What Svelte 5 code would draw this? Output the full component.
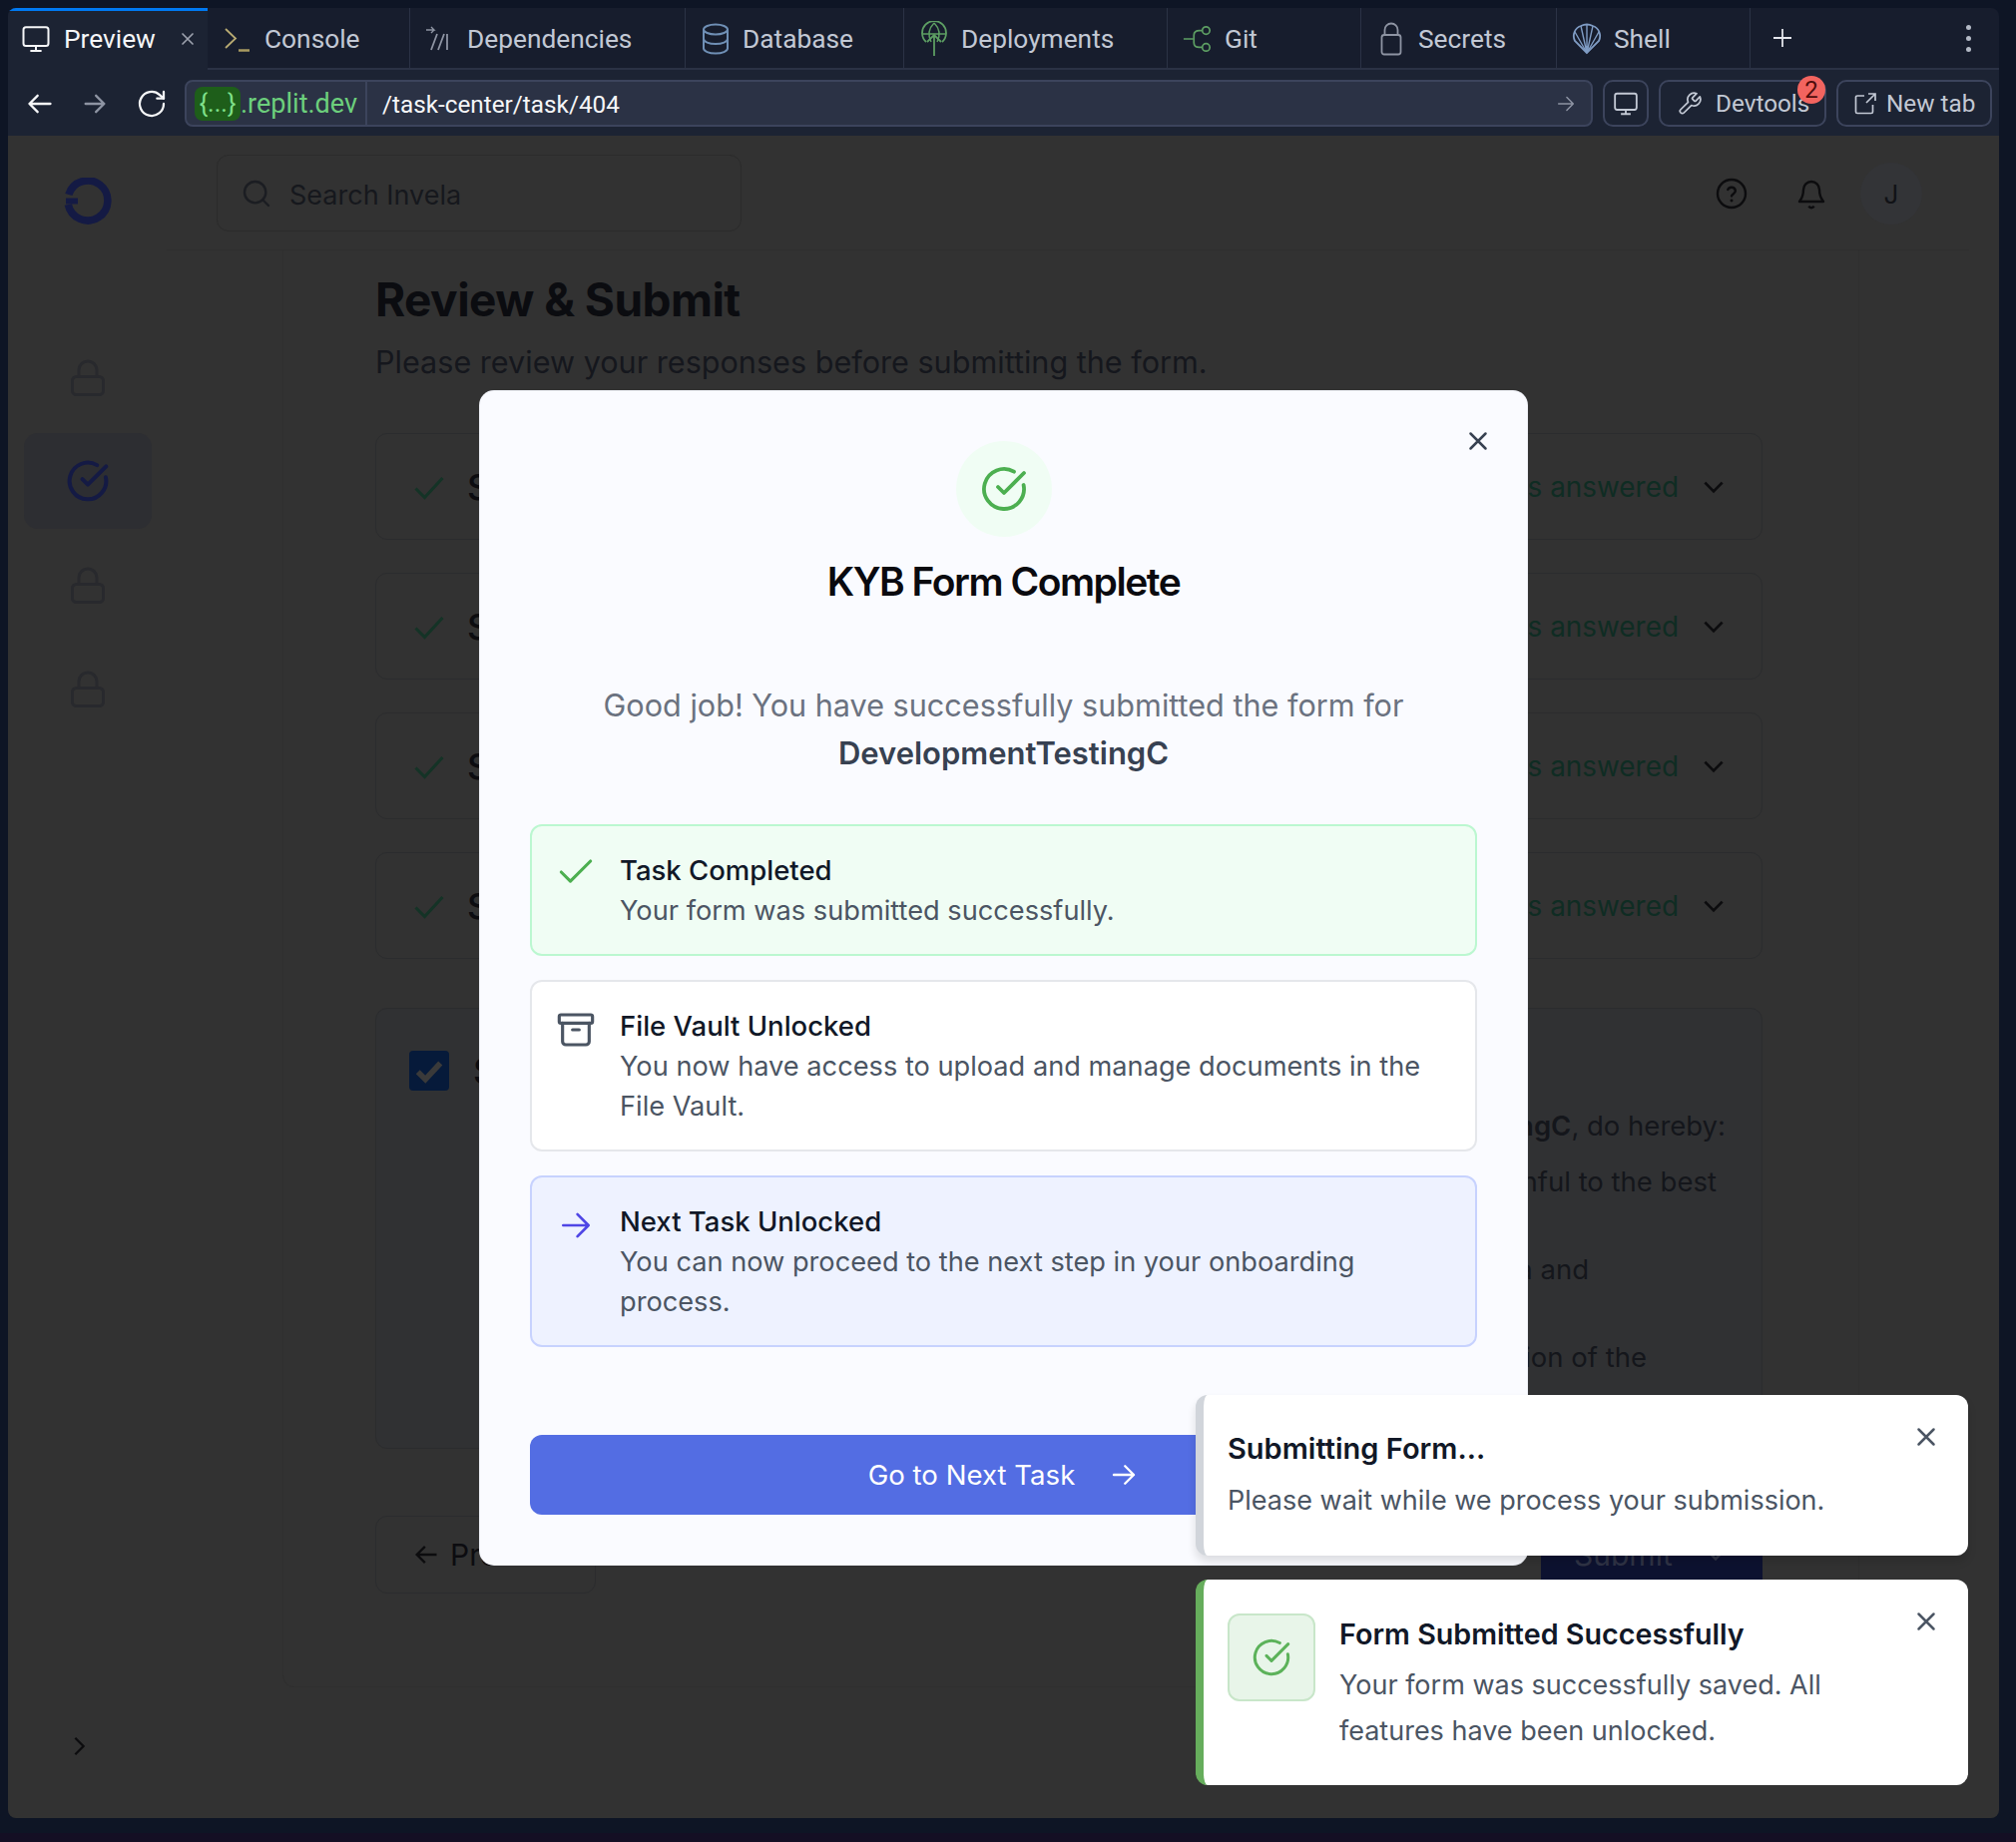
<script>
	const tabs = [
		{ name: 'Console', w: 203, icon: 'console' },
		{ name: 'Dependencies', w: 276, icon: 'deps' },
		{ name: 'Database', w: 219, icon: 'db' },
		{ name: 'Deployments', w: 264, icon: 'deploy' },
		{ name: 'Git', w: 194, icon: 'git' },
		{ name: 'Secrets', w: 196, icon: 'lock' },
		{ name: 'Shell', w: 194, icon: 'shell' }
	];
	const sections = ['Company Information', 'Documents', 'Ownership', 'Compliance'];
	const declaration = [
		{ text: 'Confirm that all provided information is accurate and truthful to the best', cls: 'l2' },
		{ text: 'of my knowledge at the time of this submission', cls: 'l0' },
		{ text: 'Authorize the review and processing of this data and', cls: 'l3' },
		{ text: 'any documents that were supplied', cls: 'l0' },
		{ text: 'Accept the terms required for the completion of the', cls: 'l4' }
	];
</script>

{#snippet checkCircle(size, sw)}
	<svg width={size} height={size} viewBox="0 0 24 24" fill="none" stroke="currentColor" stroke-width={sw} stroke-linecap="round" stroke-linejoin="round">
		<path d="M21.8 10A10 10 0 1 1 17 3.34" />
		<path d="m9 11 3 3L22 4" />
	</svg>
{/snippet}

{#snippet close(size)}
	<svg width={size} height={size} viewBox="0 0 24 24" fill="none" stroke="currentColor" stroke-width="2" stroke-linecap="round">
		<path d="M18 6 6 18M6 6l12 12" />
	</svg>
{/snippet}

{#snippet padlock()}
	<svg width="34" height="37" viewBox="0 0 34 37" fill="none" stroke="currentColor" stroke-width="3">
		<rect x="1.500" y="17.500" width="31" height="18" rx="4" />
		<path d="M8 17v-6a9 9 0 0 1 18 0v6" />
	</svg>
{/snippet}

{#snippet arrow(size, sw)}
	<svg width={size} height={size} viewBox="0 0 24 24" fill="none" stroke="currentColor" stroke-width={sw} stroke-linecap="round" stroke-linejoin="round">
		<path d="M4 12h16M13 5l7 7-7 7" />
	</svg>
{/snippet}

{#snippet monitor(size, sw)}
	<svg width={size} height={size} viewBox="0 0 24 24" fill="none" stroke="currentColor" stroke-width={sw} stroke-linejoin="round">
		<rect x="2" y="2.500" width="20" height="15" rx="2" />
		<path d="M12 17.500v4M7.500 21.500h9" />
	</svg>
{/snippet}

<div class="frame">
	<div class="window">
		<div class="tabs">
			<div class="tab active">
				<span class="ico white">{@render monitor(30, 1.6)}</span>
				<span class="tab-name">Preview</span>
				<span class="tab-x">{@render close(20)}</span>
			</div>
			{#each tabs as tab}
				<div class="tab" style="width: {tab.w}px">
					<span class="ico">
						{#if tab.icon === 'console'}
							<svg width="30" height="30" viewBox="0 0 30 30" fill="none" stroke="#b8aa72" stroke-width="1.8"><path d="M3 5l10 9.500L3 24" /><path d="M16 26.500h11" stroke="#a89a60" stroke-width="2.5" /></svg>
						{:else if tab.icon === 'deps'}
							<svg width="30" height="30" viewBox="0 0 30 30" fill="none" stroke="#8e94a3" stroke-width="1.800"><path d="M6 26l6-16M13 26l6-16M22 10v16" /><path d="M1 6h8L6 3M9 6 6 9" stroke-width="1.400" /></svg>
						{:else if tab.icon === 'db'}
							<svg width="28" height="32" viewBox="0 0 28 32" fill="none" stroke="#6f8fb5" stroke-width="2"><ellipse cx="14" cy="6.500" rx="12" ry="5" /><path d="M2 6.500v19c0 2.800 5.400 5 12 5s12-2.200 12-5v-19M2 16c0 2.800 5.400 5 12 5s12-2.200 12-5" /></svg>
						{:else if tab.icon === 'deploy'}
							<svg width="30" height="36" viewBox="0 0 30 36" fill="none" stroke="#5d9e63" stroke-width="1.800"><path d="M7 21A12 12 0 1 1 23 21" /><path d="M3 13h24M15 2c-6 6-6 13-3 19M15 2c6 6 6 13 3 19" stroke-width="1.500" /><path d="M15 35V14M8 21l7-7 7 7" /></svg>
						{:else if tab.icon === 'git'}
							<svg width="30" height="30" viewBox="0 0 32 30" fill="none" stroke="#5d9e63" stroke-width="1.800"><circle cx="25" cy="6" r="4" /><circle cx="25" cy="24" r="4" /><path d="M1 15h10M21 6h-3c-4 0-6 2-6 5v8c0 3 2 5 6 5h3" /></svg>
						{:else if tab.icon === 'lock'}
							<svg width="22" height="34" viewBox="0 0 22 34" fill="none" stroke="#8e94a3" stroke-width="1.800"><rect x="1.500" y="13" width="19" height="19.500" rx="2.500" /><path d="M4.500 13V8a6.500 6.500 0 0 1 13 0v5" /></svg>
						{:else}
							<svg width="30" height="32" viewBox="0 0 30 32" fill="none" stroke="#7f9cc4" stroke-width="1.800"><path d="M15 30 3 18C0 12 3 5 9 3c4-2 8-2 12 0 6 2 9 9 6 15z" /><path d="M15 30 9 3M15 30l6-27M15 30V2M15 30 3 9M15 30 27 9" stroke-width="1.400" /></svg>
						{/if}
					</span>
					<span class="tab-name">{tab.name}</span>
				</div>
			{/each}
			<div class="tab-rest">
				<svg width="20" height="20" viewBox="0 0 20 20" stroke="#e4e6ec" stroke-width="1.800"><path d="M10 1v18M1 10h18" /></svg>
				<span class="kebab"><i></i><i></i><i></i></span>
			</div>
		</div>

		<div class="urlrow">
			<div class="nav">
				<span class="white">
					<svg width="28" height="28" viewBox="0 0 24 24" fill="none" stroke="currentColor" stroke-width="2" stroke-linecap="round" stroke-linejoin="round"><path d="M21 12H3M10 5l-7 7 7 7" /></svg>
				</span>
				<span class="dimmed">{@render arrow(28, 2)}</span>
				<span class="white">
					<svg width="32" height="32" viewBox="0 0 24 24" fill="none" stroke="currentColor" stroke-width="1.700" stroke-linecap="round" stroke-linejoin="round"><path d="M21 12a9 9 0 1 1-3-6.700L21 8" /><path d="M21 3v5h-5" /></svg>
				</span>
			</div>
			<div class="url">
				<div class="domain"><span class="chip">&#123;...&#125;</span><span class="host">.replit.dev</span></div>
				<div class="path">/task-center/task/404</div>
				<span class="dimmed go">{@render arrow(22, 1.600)}</span>
			</div>
			<div class="btn square"><span>{@render monitor(26, 1.700)}</span></div>
			<div class="btn devtools">
				<svg width="26" height="26" viewBox="0 0 24 24" fill="none" stroke="currentColor" stroke-width="1.600" stroke-linejoin="round"><path d="M14.700 6.300a1 1 0 0 0 0 1.400l1.600 1.600a1 1 0 0 0 1.400 0l3.800-3.800a6 6 0 0 1-7.900 7.900l-6.900 6.900a2.100 2.100 0 0 1-3-3l6.900-6.900a6 6 0 0 1 7.900-7.900z" /></svg>
				<span>Devtools</span>
				<b class="badge">2</b>
			</div>
			<div class="btn newtab">
				<svg width="24" height="24" viewBox="0 0 24 24" fill="none" stroke="currentColor" stroke-width="1.700"><path d="M11 4H4a1.500 1.500 0 0 0-1.500 1.500V20A1.500 1.500 0 0 0 4 21.500h14a1.500 1.500 0 0 0 1.500-1.500v-7" /><path d="M13 11 22 2M15 2h7v7" /></svg>
				<span>New tab</span>
			</div>
		</div>

		<div class="viewport">
			<aside class="sidebar">
				<svg class="logo" width="48" height="48" viewBox="0 0 48 48" fill="none">
					<path d="M4.800 17A20 20 0 1 1 4.300 27" stroke="#141a44" stroke-width="7.500" />
					<rect x="2" y="20.500" width="12" height="6" fill="#141a44" />
				</svg>
				<div class="nav-item lock">{@render padlock()}</div>
				<div class="nav-item current">{@render checkCircle(44, 2.200)}</div>
				<div class="nav-item lock">{@render padlock()}</div>
				<div class="nav-item lock">{@render padlock()}</div>
				<div class="expand">
					<svg width="22" height="22" viewBox="0 0 24 24" fill="none" stroke="#0c0c0e" stroke-width="2.500"><path d="m8 3 9 9-9 9" /></svg>
				</div>
			</aside>

			<div class="main">
				<header class="topbar">
					<div class="search">
						<svg width="32" height="32" viewBox="0 0 24 24" fill="none" stroke="#1b1d22" stroke-width="1.800" stroke-linecap="round"><circle cx="11" cy="11" r="8" /><path d="m21 21-4.300-4.300" /></svg>
						<span>Search Invela</span>
					</div>
					<div class="top-icons">
						<svg width="32" height="32" viewBox="0 0 24 24" fill="none" stroke="#0c0c0e" stroke-width="1.800" stroke-linecap="round"><circle cx="12" cy="12" r="10.500" /><path d="M9.200 9a3 3 0 0 1 5.700 1c0 2-2.900 2.500-2.900 3.800" /><path d="M12 17.200h.01" stroke-width="2.200" /></svg>
						<svg width="32" height="32" viewBox="0 0 24 24" fill="none" stroke="#0c0c0e" stroke-width="1.800" stroke-linejoin="round"><path d="M6 9a6 6 0 0 1 12 0c0 6 2.500 8 3 9H3c.5-1 3-3 3-9z" /><path d="M10 21.500a2.300 2.300 0 0 0 4 0" /></svg>
						<span class="avatar">J</span>
					</div>
				</header>

				<div class="panel">
					<div class="page">
						<h1>Review &amp; Submit</h1>
						<p class="lead">Please review your responses before submitting the form.</p>
						<div class="cards">
							{#each sections as section}
								<div class="card">
									<svg width="36" height="36" viewBox="0 0 24 24" fill="none" stroke="#143326" stroke-width="2"><path d="M3 13l6 6L21 6" /></svg>
									<span class="card-title">Section: {section}</span>
									<span class="answered">All questions answered</span>
									<svg width="26" height="26" viewBox="0 0 24 24" fill="none" stroke="#0c0c0e" stroke-width="2.500"><path d="m4 8 8 8 8-8" /></svg>
								</div>
							{/each}
						</div>
						<div class="decl">
							<div class="decl-head">
								<span class="box">
									<svg width="30" height="30" viewBox="0 0 24 24" fill="none" stroke="#3a3a3a" stroke-width="4.500"><path d="M3 13l6 6L21 6" /></svg>
								</span>
								<span class="card-title">Submit</span>
							</div>
							<p class="l1">I, acting as the duly authorized representative of company <b>DevelopmentTestingC</b>, do hereby:</p>
							{#each declaration as line}
								<p class={line.cls}>{line.text}</p>
							{/each}
						</div>
						<div class="actions">
							<div class="prev">
								<svg width="28" height="28" viewBox="0 0 24 24" fill="none" stroke="#0c0c0e" stroke-width="2"><path d="M21 12H4M11 5l-7 7 7 7" /></svg>
								<span>Previous</span>
							</div>
							<div class="submit">
								<span>Submit</span>
								<svg width="26" height="26" viewBox="0 0 24 24" fill="none" stroke="#2f3345" stroke-width="2.500"><path d="m4 8 8 8 8-8" /></svg>
							</div>
						</div>
					</div>
				</div>
			</div>

			<!-- the success dialog sits over the dimmed page -->
			<div class="modal">
				<span class="modal-x">{@render close(30)}</span>
				<div class="badge-ok">{@render checkCircle(48, 1.900)}</div>
				<h2>KYB Form Complete</h2>
				<p class="msg">Good job! You have successfully submitted the form for <b>DevelopmentTestingC</b></p>
				<div class="items">
					<div class="item ok">
						<svg class="green" width="44" height="44" viewBox="0 0 24 24" fill="none" stroke="currentColor" stroke-width="1.700" stroke-linecap="round" stroke-linejoin="round"><path d="M20 6 9 17l-5-5" /></svg>
						<div>
							<div class="item-title">Task Completed</div>
							<div class="item-desc">Your form was submitted successfully.</div>
						</div>
					</div>
					<div class="item plain">
						<svg class="slate" width="40" height="40" viewBox="0 0 24 24" fill="none" stroke="currentColor" stroke-width="1.900" stroke-linecap="round" stroke-linejoin="round"><rect x="2" y="3" width="20" height="5" rx="1" /><path d="M4 8v11a2 2 0 0 0 2 2h12a2 2 0 0 0 2-2V8M10 12h4" /></svg>
						<div>
							<div class="item-title">File Vault Unlocked</div>
							<div class="item-desc">You now have access to upload and manage documents in the File Vault.</div>
						</div>
					</div>
					<div class="item next">
						<span class="indigo">{@render arrow(38, 1.700)}</span>
						<div>
							<div class="item-title">Next Task Unlocked</div>
							<div class="item-desc">You can now proceed to the next step in your onboarding process.</div>
						</div>
					</div>
				</div>
				<div class="primary">
					<span>Go to Next Task</span>
					{@render arrow(30, 1.900)}
				</div>
			</div>

			<div class="toasts">
				<div class="toast pending">
					<div>
						<div class="toast-title">Submitting Form...</div>
						<div class="toast-desc">Please wait while we process your submission.</div>
					</div>
					<span class="toast-x">{@render close(30)}</span>
				</div>
				<div class="toast done">
					<span class="toast-icon">{@render checkCircle(40, 1.800)}</span>
					<div>
						<div class="toast-title">Form Submitted Successfully</div>
						<div class="toast-desc">Your form was successfully saved. All features have been unlocked.</div>
					</div>
					<span class="toast-x">{@render close(30)}</span>
				</div>
			</div>
		</div>
	</div>
	<div class="foot"></div>
</div>

<style>
	:global(body) {
		margin: 0;
		background: #140f24;
		overflow: hidden;
	}

	.frame {
		width: 2020px;
		height: 1846px;
		box-sizing: border-box;
		display: flex;
		flex-direction: column;
		background: #0e1525;
		padding: 8px 17px 0 8px;
		font-family: Inter, "Liberation Sans", sans-serif;
		position: relative;
	}

	.foot {
		position: absolute;
		left: 0;
		right: 0;
		bottom: 0;
		height: 9px;
		background: #140f24;
	}

	.window {
		height: 1814px;
		display: flex;
		flex-direction: column;
		border-radius: 8px;
		overflow: hidden;
	}

	.tabs {
		height: 62px;
		display: flex;
		background: #171d2d;
		font-family: Roboto, "Liberation Sans", sans-serif;
		font-size: 26.300px;
		color: #c2c8d4;
		flex: none;
	}

	.tab {
		box-sizing: border-box;
		display: flex;
		align-items: center;
		gap: 12px;
		padding: 2px 0 0 15px;
		border-right: 1px solid #2b3245;
		border-bottom: 2px solid #2b3245;
	}

	.tab.active {
		width: 200px;
		background: #1c2333;
		border-top: 3px solid #0079f2;
		border-bottom: none;
		border-right: none;
		color: #f5f6f8;
		padding: 0 0 3px 13px;
		gap: 13px;
	}

	.ico {
		width: 30px;
		flex: none;
		display: flex;
		align-items: center;
		justify-content: center;
	}

	.tab-x {
		display: flex;
		margin-left: 9px;
		color: #9da2ae;
	}

	.tab-rest {
		flex: 1;
		display: flex;
		align-items: center;
		justify-content: space-between;
		padding: 0 28px 0 22px;
		border-bottom: 2px solid #2b3245;
	}

	.kebab {
		display: flex;
		flex-direction: column;
		gap: 6px;
	}

	.kebab i {
		width: 5px;
		height: 5px;
		border-radius: 50%;
		background: #b4bac6;
	}

	.white {
		color: #f5f6f8;
		display: flex;
	}

	.dimmed {
		color: #8e94a3;
		display: flex;
	}

	.urlrow {
		height: 66px;
		flex: none;
		background: #1c2333;
		display: flex;
		align-items: flex-start;
		padding-top: 10px;
		box-sizing: border-box;
		font-family: Roboto, "Liberation Sans", sans-serif;
		font-size: 24.300px;
		color: #c2c8d4;
	}

	.nav {
		width: 177px;
		height: 47px;
		flex: none;
		display: flex;
		align-items: center;
		gap: 27px;
		padding-left: 18px;
		box-sizing: border-box;
	}

	.url {
		width: 1411px;
		height: 47px;
		box-sizing: border-box;
		flex: none;
		background: #2b3245;
		border: 2px solid #3c445c;
		border-radius: 8px;
		display: flex;
		align-items: center;
	}

	.domain {
		width: 181px;
		height: 100%;
		box-sizing: border-box;
		flex: none;
		display: flex;
		align-items: center;
		padding-left: 8px;
		border-right: 2px solid #3c445c;
		color: #6ccf7c;
		font-size: 27px;
	}

	.host {
		padding-top: 1px;
	}

	.chip {
		background: #1e5e1a;
		color: #7fe08a;
		width: 46px;
		height: 34px;
		border-radius: 8px;
		display: flex;
		align-items: center;
		justify-content: center;
		font-size: 25px;
	}

	.path {
		flex: 1;
		padding: 1px 0 0 15px;
		color: #f5f6f8;
	}

	.go {
		margin-right: 14px;
	}

	.btn {
		height: 47px;
		box-sizing: border-box;
		flex: none;
		border: 2px solid #3c445c;
		border-radius: 10px;
		display: flex;
		align-items: center;
		position: relative;
	}

	.btn.square {
		width: 46px;
		margin-left: 10px;
		justify-content: center;
	}

	.btn.square span {
		display: flex;
	}

	.btn.devtools {
		width: 168px;
		margin-left: 10px;
		padding-left: 16px;
		gap: 13px;
	}

	.btn.newtab {
		width: 156px;
		margin-left: 10px;
		padding-left: 15px;
		gap: 9px;
	}

	.badge {
		position: absolute;
		top: -6px;
		right: -1px;
		width: 28px;
		height: 28px;
		border-radius: 50%;
		background: #f2645f;
		color: #4f0d0c;
		font-size: 24px;
		font-weight: 400;
		display: flex;
		align-items: center;
		justify-content: center;
	}

	.viewport {
		flex: 1;
		min-height: 0;
		position: relative;
		background: #323232;
		display: flex;
	}

	.sidebar {
		width: 159px;
		flex: none;
		display: flex;
		flex-direction: column;
		align-items: center;
		padding-top: 42px;
		box-sizing: border-box;
	}

	.logo {
		margin-bottom: 104px;
	}

	.nav-item {
		width: 128px;
		display: flex;
		align-items: center;
		justify-content: center;
		height: 96px;
		border-radius: 14px;
		margin-bottom: 8px;
	}

	.nav-item.lock {
		color: #28292d;
	}

	.nav-item.current {
		background: #2d2e32;
		color: #141a44;
	}

	.expand {
		margin-top: auto;
		margin-bottom: 61px;
		margin-right: 17px;
		display: flex;
	}

	.main {
		flex: 1;
		min-width: 0;
		display: flex;
		flex-direction: column;
	}

	.topbar {
		height: 115px;
		box-sizing: border-box;
		flex: none;
		display: flex;
		align-items: flex-start;
		justify-content: space-between;
		padding: 19px 47px 0 50px;
		margin-right: 30px;
		border-bottom: 1px solid #2e2e2e;
	}

	.search {
		width: 526px;
		height: 77px;
		box-sizing: border-box;
		border: 1px solid #2b2b2b;
		border-radius: 12px;
		display: flex;
		align-items: center;
		gap: 17px;
		padding-left: 23px;
		font-size: 27px;
		color: #16181d;
	}

	.search span {
		padding-top: 3px;
	}

	.top-icons {
		display: flex;
		align-items: center;
		gap: 48px;
		height: 62px;
		margin-top: 8px;
	}

	.avatar {
		width: 62px;
		height: 62px;
		margin-left: -15px;
		border-radius: 50%;
		background: #333437;
		color: #111216;
		font-size: 26px;
		display: flex;
		align-items: center;
		justify-content: center;
	}

	.panel {
		width: 1580px;
		height: 1440px;
		box-sizing: border-box;
		margin-left: 116px;
		border: 1px solid #2f2f2f;
		border-top: none;
		border-radius: 0 0 12px 12px;
	}

	.page {
		width: 1390px;
		margin-left: 92px;
		padding-top: 19px;
	}

	h1 {
		margin: 0;
		font-size: 46px;
		line-height: 60px;
		font-weight: 700;
		letter-spacing: -0.012em;
		color: #0b0c10;
	}

	.lead {
		margin: 0;
		padding-top: 13px;
		font-size: 30.600px;
		line-height: 40px;
		color: #15171d;
	}

	.cards {
		display: flex;
		flex-direction: column;
		gap: 33px;
		margin-top: 51px;
	}

	.card {
		height: 107px;
		box-sizing: border-box;
		border: 1px solid #2b2c2e;
		border-radius: 12px;
		display: flex;
		align-items: center;
		padding: 0 35px 0 35px;
		gap: 20px;
	}

	.card-title {
		flex: 1;
		font-size: 36px;
		font-weight: 500;
		color: #0c0c10;
	}

	.answered {
		font-size: 27.900px;
		color: #0f2c23;
		margin-right: 2px;
	}

	.decl {
		margin-top: 49px;
		height: 442px;
		box-sizing: border-box;
		border: 1px solid #2b2c2e;
		border-radius: 12px;
		background: #303133;
		padding: 40px 36px 0 33px;
		font-size: 27.500px;
		color: #14161b;
		overflow: hidden;
	}

	.decl-head {
		display: flex;
		align-items: center;
		gap: 24px;
	}

	.box {
		width: 40px;
		height: 40px;
		background: #061a3a;
		border-radius: 4px;
		display: flex;
		align-items: center;
		justify-content: center;
	}

	.decl p {
		margin: 0;
		height: 44px;
		line-height: 44px;
		text-align: right;
		white-space: nowrap;
	}

	.decl .l1 {
		margin-top: 11px;
		display: flex;
		justify-content: flex-end;
		gap: 0.3em;
	}

	.decl .l1 b {
		font-weight: 600;
		margin-right: -0.3em;
	}

	.decl .l2 {
		padding-right: 9px;
		margin-top: 12px;
	}

	.decl .l3 {
		padding-right: 137px;
	}

	.decl .l4 {
		padding-right: 79px;
	}

	.decl .l0 {
		text-align: left;
		padding-left: 90px;
	}

	.actions {
		display: flex;
		justify-content: space-between;
		margin-top: 67px;
	}

	.prev {
		width: 221px;
		height: 78px;
		box-sizing: border-box;
		border: 1px solid #2b2c2e;
		border-radius: 12px;
		display: flex;
		align-items: center;
		gap: 10px;
		padding-left: 36px;
		font-size: 30px;
		color: #0c0c10;
	}

	.submit {
		width: 222px;
		height: 78px;
		box-sizing: border-box;
		background: #0d1230;
		border-radius: 8px;
		color: #2f3345;
		font-size: 30px;
		display: flex;
		align-items: center;
		gap: 30px;
		padding-left: 33px;
	}

	.modal {
		position: absolute;
		left: 473px;
		top: 256px;
		width: 1049px;
		height: 1176px;
		box-sizing: border-box;
		background: #fafbff;
		border-radius: 14px;
		padding: 50px;
		display: flex;
		flex-direction: column;
		align-items: center;
		box-shadow: 0 0 0 1px #eceef4;
	}

	.modal-x {
		position: absolute;
		right: 34px;
		top: 35px;
		display: flex;
		color: #374151;
	}

	.badge-ok {
		width: 96px;
		height: 96px;
		border-radius: 50%;
		background: #f0fdf4;
		color: #4caf50;
		display: flex;
		align-items: center;
		justify-content: center;
		flex: none;
	}

	h2 {
		margin: 22px 0 0;
		font-size: 39px;
		line-height: 46px;
		font-weight: 600;
		letter-spacing: -0.038em;
		color: #0a0a0f;
	}

	.msg {
		margin: 77px 0 0;
		width: 900px;
		text-align: center;
		font-size: 30.600px;
		line-height: 48px;
		color: #6b7280;
	}

	.msg b {
		display: block;
		font-size: 31px;
		font-weight: 600;
		color: #374151;
	}

	.items {
		width: 100%;
		display: flex;
		flex-direction: column;
		gap: 24px;
		margin-top: 47px;
	}

	.item {
		box-sizing: border-box;
		border: 2px solid;
		border-radius: 12px;
		padding: 24px 28px 23px;
		display: flex;
		gap: 28px;
		line-height: 40px;
	}

	.item.ok {
		background: #f0fdf4;
		border-color: #bbf7d0;
	}

	.item.plain {
		background: #ffffff;
		border-color: #e5e7eb;
	}

	.item.next {
		background: #eef2ff;
		border-color: #c7d2fe;
	}

	.green {
		color: #4caf50;
		flex: none;
		margin: 0 -6px;
	}

	.slate {
		color: #4b5563;
		flex: none;
		margin: 4px -4px 0;
	}

	.indigo {
		color: #4f46e5;
		flex: none;
		display: flex;
		height: 38px;
		margin: 5px -3px 0;
	}

	.item-title {
		font-size: 27.500px;
		line-height: 41px;
		font-weight: 500;
		color: #111827;
	}

	.item-desc {
		font-size: 27.200px;
		color: #4b5563;
	}

	.primary {
		margin-top: 88px;
		width: 100%;
		height: 80px;
		flex: none;
		background: #536de3;
		border-radius: 12px;
		color: #ffffff;
		font-size: 27.600px;
		display: flex;
		align-items: center;
		justify-content: center;
		gap: 34px;
	}

	.toasts {
		position: absolute;
		right: 31px;
		bottom: 33px;
		width: 774px;
		display: flex;
		flex-direction: column;
		gap: 24px;
	}

	.toast {
		position: relative;
		box-sizing: border-box;
		background: #ffffff;
		border-radius: 12px;
		border-left: 8px solid;
		display: flex;
		font-size: 27px;
	}

	.toast.pending {
		height: 161px;
		border-left-color: #d1d5db;
		padding: 32px 0 0 24px;
		box-shadow: 0 6px 10px rgba(0, 0, 0, 0.12);
	}

	.toast.done {
		height: 206px;
		border-left-color: #66ad5c;
		padding: 34px 60px 0 24px;
		gap: 24px;
	}

	.toast-icon {
		width: 88px;
		height: 88px;
		box-sizing: border-box;
		flex: none;
		background: #e8f5e9;
		border: 2px solid #c8e6c9;
		border-radius: 12px;
		color: #5cb25a;
		display: flex;
		align-items: center;
		justify-content: center;
	}

	.toast-title {
		font-weight: 600;
		font-size: 29px;
		line-height: 44px;
		color: #111827;
	}

	.done .toast-title {
		font-size: 28.700px;
		margin-top: -1px;
	}

	.toast-desc {
		color: #4b5563;
		line-height: 46px;
		margin-top: 7px;
	}

	.done .toast-desc {
		margin-top: 6px;
	}

	.toast-x {
		position: absolute;
		right: 27px;
		top: 27px;
		display: flex;
		color: #4b5563;
	}
</style>
